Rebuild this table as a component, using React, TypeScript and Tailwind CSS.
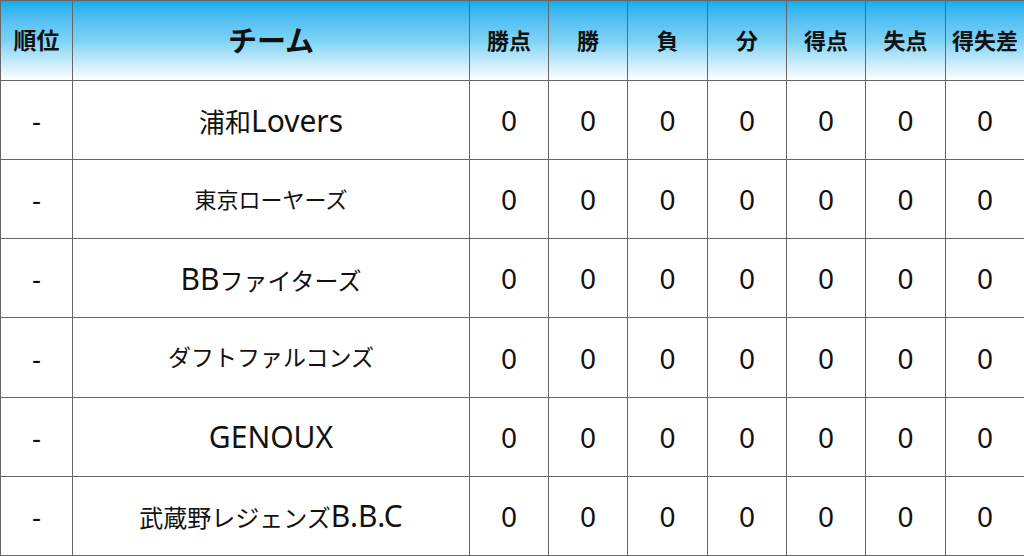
import React from "react";

const teams: { name: string; size: string }[] = [
  { name: "浦和Lovers", size: "text-[26px]" },
  { name: "東京ローヤーズ", size: "text-[22px]" },
  { name: "BBファイターズ", size: "text-[24px]" },
  { name: "ダフトファルコンズ", size: "text-[23px]" },
  { name: "GENOUX", size: "text-[26px]" },
  { name: "武蔵野レジェンズB.B.C", size: "text-[24px]" },
];

const statCols = ["勝点", "勝", "負", "分", "得点", "失点", "得失差"];
const statWidths = ["w-[79px]", "w-[79px]", "w-[80px]", "w-[79px]", "w-[79px]", "w-[80px]", "w-[79px]"];

// latin runs render larger than the kana/kanji in the original
const TeamName: React.FC<{ name: string; size: string }> = ({ name, size }) => {
  const parts = name.match(/[A-Za-z0-9.]+|[^A-Za-z0-9.]+/g) ?? [];
  return (
    <>
      {parts.map((p, i) =>
        /^[A-Za-z0-9.]+$/.test(p) ? (
          <span key={i} className="text-[30px]">
            {p}
          </span>
        ) : (
          <span key={i} className={size}>
            {p}
          </span>
        )
      )}
    </>
  );
};

const App: React.FC = () => {
  return (
    <div
      className="w-[1024px] h-[556px] bg-white text-[#111]"
      style={{ fontFamily: '"Noto Sans", "Noto Sans CJK JP", sans-serif' }}
    >
      <table className="w-full h-full table-fixed border-collapse border border-[#8a8a8a]">
        <colgroup>
          <col className="w-[72px]" />
          <col className="w-[397px]" />
          {statWidths.map((w, i) => (
            <col key={i} className={w} />
          ))}
        </colgroup>
        <thead>
          <tr className="h-[80px] bg-linear-to-b from-[#12adef] via-[#7fd3f5] to-white">
            <th className="border border-[#666] text-[23px] font-bold">順位</th>
            <th className="border border-[#666] text-[29px] font-bold">チーム</th>
            {statCols.map((c) => (
              <th key={c} className="border border-[#666] text-[22px] font-bold whitespace-nowrap">
                {c}
              </th>
            ))}
          </tr>
        </thead>
        <tbody>
          {teams.map((t) => (
            <tr key={t.name} className="h-[79px]">
              <td className="border border-[#666] text-center text-[28px]">-</td>
              <td className="border border-[#666] text-center whitespace-nowrap">
                <TeamName name={t.name} size={t.size} />
              </td>
              {statCols.map((c) => (
                <td key={c} className="border border-[#666] text-center text-[28px]">
                  0
                </td>
              ))}
            </tr>
          ))}
        </tbody>
      </table>
    </div>
  );
};

export default App;
